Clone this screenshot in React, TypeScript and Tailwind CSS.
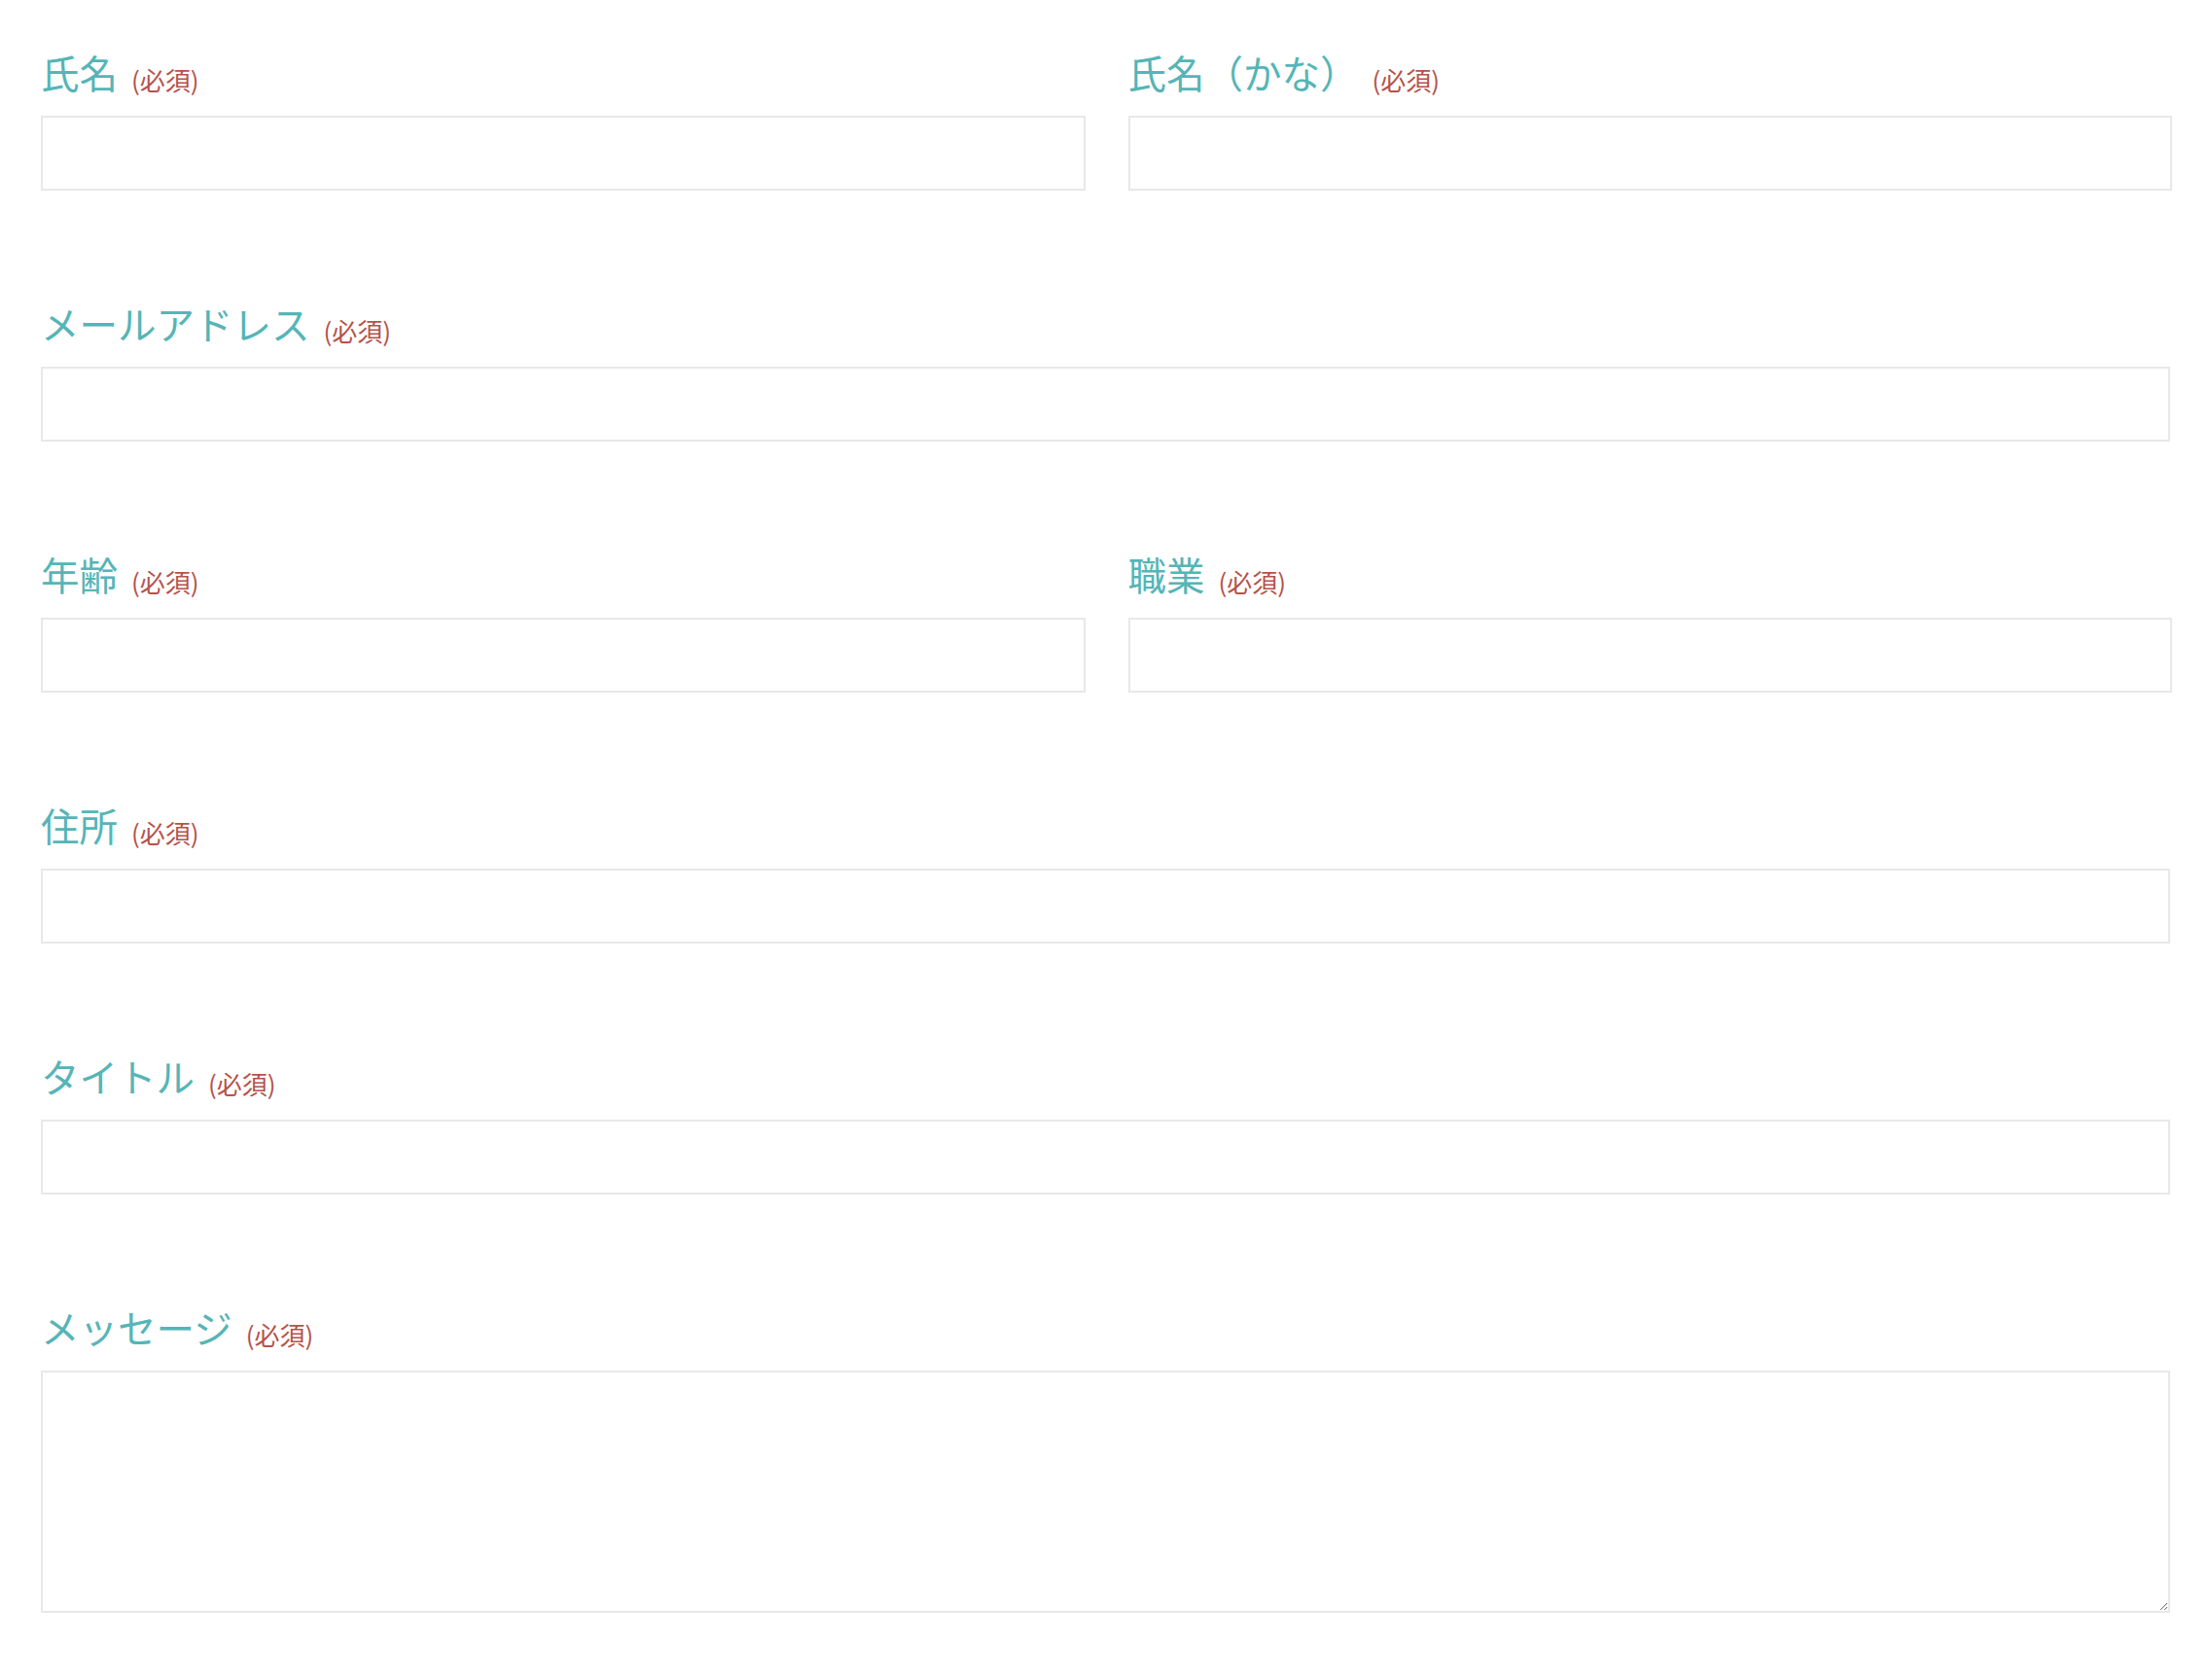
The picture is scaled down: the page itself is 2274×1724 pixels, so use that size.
import React from "react";

const FONT = "font-['Noto_Sans_CJK_JP','Noto_Sans',sans-serif]";

function Label({ text }: { text: string }) {
  return (
    <div className="flex items-baseline mb-[20px]">
      <span className="text-[39.5px] leading-[50px] text-[#55b5b7]">{text}</span>
      <span className="ml-[14px] text-[26px] text-[#b5524a] translate-y-[2px]">(必須)</span>
    </div>
  );
}

function Field({ label }: { label: string }) {
  return (
    <div>
      <Label text={label} />
      <input
        type="text"
        className="block w-full h-[77px] border-2 border-[#e8e8e8] bg-white px-4 outline-none"
      />
    </div>
  );
}

export default function App() {
  return (
    <div className={`bg-white min-h-[1724px] pl-[42px] pr-[43px] pt-[49px] pb-[65px] ${FONT}`}>
      <form className="flex flex-col gap-[111px]">
        {/* name row */}
        <div className="grid grid-cols-2 gap-[44px] mr-[-2px]">
          <Field label="氏名" />
          <Field label="氏名（かな）" />
        </div>

        <Field label="メールアドレス" />

        <div className="grid grid-cols-2 gap-[44px] mr-[-2px]">
          <Field label="年齢" />
          <Field label="職業" />
        </div>

        <Field label="住所" />
        <Field label="タイトル" />

        <div>
          <Label text="メッセージ" />
          <textarea className="block w-full h-[249px] border-2 border-[#e8e8e8] bg-white p-4 outline-none" />
        </div>
      </form>
    </div>
  );
}
